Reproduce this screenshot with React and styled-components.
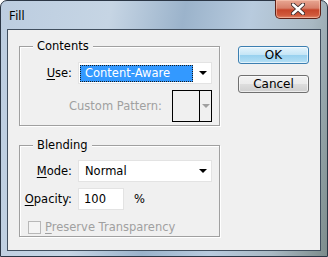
import React from 'react'
import styled, { createGlobalStyle } from 'styled-components'

const Global = createGlobalStyle`
  html, body {
    margin: 0;
    padding: 0;
    background: #fff;
  }
`

const Window = styled.div`
  box-sizing: border-box;
  width: 328px;
  height: 257px;
  padding: 0 6px 5px 6px;
  border: 1px solid #2b3645;
  border-radius: 7px 7px 0 0;
  background: linear-gradient(100deg, #bccde0 0%, #c6d5e4 30%, #9bb3cb 50%, #b8cbde 68%, #a9b9c3 85%, #7d8c8c 100%);
  display: flex;
  flex-direction: column;
  font-family: "DejaVu Sans", Tahoma, sans-serif;
  font-size: 11.5px;
  color: #000;
`

const TitleBar = styled.div`
  height: 28px;
  display: flex;
  align-items: flex-start;
  justify-content: space-between;
`

const Title = styled.span`
  font-family: "Noto Sans", "Open Sans", sans-serif;
  font-size: 12px;
  line-height: 12px;
  margin: 9px 0 0 2px;
  color: #000;
`

const CloseButton = styled.div`
  width: 46px;
  height: 19px;
  margin-top: -1px;
  box-sizing: border-box;
  border: 1px solid #5e2218;
  border-top: none;
  border-radius: 0 0 5px 5px;
  background: linear-gradient(180deg, #e8a793 0%, #d7806a 45%, #c6452a 55%, #d05a3c 85%, #e0896e 100%);
  box-shadow: inset 0 0 0 1px rgba(255, 210, 190, 0.5);
  display: flex;
  align-items: center;
  justify-content: center;
`

const Client = styled.div`
  flex: 1;
  border: 1px solid #414f5f;
  background: #f0f0f0;
  display: flex;
  padding: 0 0 0 11px;
`

const LeftColumn = styled.div`
  display: flex;
  flex-direction: column;
`

const GroupBox = styled.div`
  position: relative;
  box-sizing: border-box;
  width: 201px;
  height: ${p => p.$height}px;
  margin-top: ${p => p.$top}px;
  border: 1px solid #a0a0a0;
  box-shadow: inset 1px 1px 0 #fff, 1px 1px 0 #fff;
  padding: ${p => p.$pad}px 7px 0 0;
  display: grid;
  grid-template-columns: 52px 1fr;
  column-gap: 6px;
  align-content: start;
`

const Legend = styled.span`
  position: absolute;
  left: 13px;
  top: -8px;
  padding: 0 4px;
  background: #f0f0f0;
  line-height: 14px;
`

const Label = styled.span`
  text-align: right;
  align-self: center;
  white-space: nowrap;
  margin-top: ${p => p.$top || 0}px;
  color: ${p => (p.$disabled ? '#a0a0a0' : '#000')};
`

const Key = styled.span`
  text-decoration: underline;
  text-underline-offset: 2px;
`

const Select = styled.div`
  box-sizing: border-box;
  height: 22px;
  background: #fff;
  border: 1px solid #e3e3e3;
  display: flex;
  align-items: center;
  padding: 1px 4px 1px 1px;
`

const SelectValue = styled.span`
  flex: 1;
  height: 17px;
  box-sizing: border-box;
  line-height: 17px;
  padding-left: 5px;
  margin-right: 6px;
  white-space: nowrap;
  ${p =>
    p.$selected &&
    `
    line-height: 15px;
    padding-left: 4px;
    background: #3399ff;
    color: #fff;
    border: 1px dotted #1c1c1c;
  `}
`

const Caret = styled.span`
  width: 0;
  height: 0;
  border-left: 4px solid transparent;
  border-right: 4px solid transparent;
  border-top: 4px solid ${p => p.$color || '#000'};
`

const Row = styled.div`
  grid-column: 1 / 3;
  display: flex;
  align-items: center;
  justify-content: ${p => p.$justify || 'flex-start'};
  gap: ${p => p.$gap || 0}px;
  margin-top: ${p => p.$top || 0}px;
`

const PatternBox = styled.div`
  width: 40px;
  height: 32px;
  box-sizing: border-box;
  border: 1px solid #000;
  display: grid;
  grid-template-columns: 26px 1fr;
`

const PatternArrow = styled.div`
  border-left: 1px solid #000;
  display: flex;
  align-items: center;
  justify-content: center;
`

const Cell = styled.div`
  margin-top: ${p => p.$top || 0}px;
  display: flex;
  align-items: center;
  gap: 10px;
`

const TextInput = styled.div`
  box-sizing: border-box;
  width: 46px;
  height: 22px;
  background: #fff;
  border: 1px solid #e3e3e3;
  padding-left: 5px;
  line-height: 20px;
`

const Checkbox = styled.span`
  box-sizing: border-box;
  width: 13px;
  height: 13px;
  border: 1px solid #b8b8b8;
  background: #f4f4f4;
  margin-left: 8px;
`

const Disabled = styled.span`
  color: #a0a0a0;
`

const RightColumn = styled.div`
  display: flex;
  flex-direction: column;
  gap: 11px;
  margin: 16px 0 0 18px;
`

const Button = styled.div`
  box-sizing: border-box;
  width: 71px;
  height: 18px;
  border-radius: 3px;
  border: 1px solid ${p => (p.$focused ? '#3c7fb1' : '#707070')};
  background: ${p =>
    p.$focused
      ? 'linear-gradient(180deg, #e5f4fc 0%, #c4e5f6 50%, #98d1ef 52%, #b6e0f5 100%)'
      : 'linear-gradient(180deg, #f2f2f2 0%, #ebebeb 50%, #dddddd 52%, #cfcfcf 100%)'};
  box-shadow: inset 0 0 0 1px rgba(255, 255, 255, 0.6);
  display: flex;
  align-items: center;
  justify-content: center;
  font-size: 12px;
`

export default function App() {
  return (
    <>
      <Global />
      <Window>
        <TitleBar>
          <Title>Fill</Title>
          <CloseButton>
            <svg width="14" height="12" viewBox="0 0 14 12">
              <path d="M2 1.5 L12 10.5 M12 1.5 L2 10.5" stroke="#3a2a2a" strokeWidth="4.2" strokeLinecap="round" />
              <path d="M2 1.5 L12 10.5 M12 1.5 L2 10.5" stroke="#fff" strokeWidth="2.4" strokeLinecap="round" />
            </svg>
          </CloseButton>
        </TitleBar>
        <Client>
          <LeftColumn>
            <GroupBox $top={16} $height={80} $pad={15}>
              <Legend>Contents</Legend>
              <Label>
                <Key>U</Key>se:
              </Label>
              <Select>
                <SelectValue $selected>Content-Aware</SelectValue>
                <Caret />
              </Select>
              <Row $justify="flex-end" $gap={10} $top={6}>
                <Label $disabled>Custom Pattern:</Label>
                <PatternBox>
                  <span />
                  <PatternArrow>
                    <Caret $color="#a0a0a0" />
                  </PatternArrow>
                </PatternBox>
              </Row>
            </GroupBox>
            <GroupBox $top={19} $height={92} $pad={14}>
              <Legend>Blending</Legend>
              <Label>
                <Key>M</Key>ode:
              </Label>
              <Select>
                <SelectValue>Normal</SelectValue>
                <Caret />
              </Select>
              <Label $top={6}>
                <Key>O</Key>pacity:
              </Label>
              <Cell $top={6}>
                <TextInput>100</TextInput>
                <span>%</span>
              </Cell>
              <Row $gap={4} $top={10}>
                <Checkbox />
                <Disabled>
                  <Key>P</Key>reserve Transparency
                </Disabled>
              </Row>
            </GroupBox>
          </LeftColumn>
          <RightColumn>
            <Button $focused>OK</Button>
            <Button>Cancel</Button>
          </RightColumn>
        </Client>
      </Window>
    </>
  )
}
